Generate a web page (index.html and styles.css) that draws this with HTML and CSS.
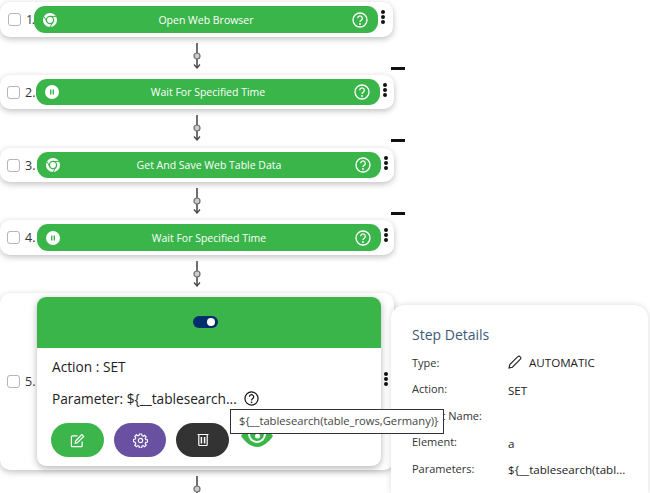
FILE: index.html
```html
<!DOCTYPE html>
<html lang="en">
<head>
    <title>Test Steps</title>
    <meta charset="utf-8"/>
    <link rel="stylesheet" href="styles.css">
</head>
<body>
<svg class="defs">
    <defs>
        <symbol id="chrome" viewBox="0 0 14 14">
            <circle cx="7" cy="7" r="7" fill="#fff"/>
            <circle cx="7" cy="7" r="3.6" fill="none" stroke="#39b54a" stroke-width="1.3"/>
            <path d="M7 3.4H13M10.2 8.8L7 14M3.9 8.8L1 3.5" stroke="#39b54a" stroke-width="1" fill="none"/>
        </symbol>
        <symbol id="pause" viewBox="0 0 14 14">
            <circle cx="7" cy="7" r="7" fill="#fff"/>
            <path d="M5 4.5h1.4v5H5zM7.6 4.5H9v5H7.6z" fill="#39b54a"/>
        </symbol>
        <symbol id="help" viewBox="0 0 16 16">
            <circle cx="8" cy="8" r="7" fill="none" stroke="currentColor" stroke-width="1.3"/>
            <path d="M5.7 6.2a2.3 2.3 0 1 1 3.5 2c-.8.5-1.2.9-1.2 1.8" fill="none" stroke="currentColor" stroke-width="1.3"/>
            <circle cx="8" cy="12" r=".9" fill="currentColor"/>
        </symbol>
        <symbol id="link" viewBox="0 0 12 26">
            <path d="M6 0V24" stroke="#707070" stroke-width="2"/>
            <circle cx="6" cy="13" r="3" fill="#ccc" stroke="#707070" stroke-width="1.2"/>
            <path d="M3 21.5L6 25L9 21.5" fill="none" stroke="#444" stroke-width="1.2"/>
        </symbol>
    </defs>
</svg>

<div class="flow">
    <div class="step step-one">
        <input class="check" type="checkbox">
        <span class="num">1.</span>
        <div class="pill pill-tall">
            <svg class="pill-icon"><use href="#chrome"/></svg>
            <span class="pill-name">Open Web Browser</span>
            <svg class="pill-help"><use href="#help"/></svg>
        </div>
        <div class="kebab"><i></i><i></i><i></i></div>
    </div>
    <div class="link"><svg><use href="#link"/></svg><b class="dash"></b></div>

    <div class="step step-two">
        <input class="check" type="checkbox">
        <span class="num">2.</span>
        <div class="pill">
            <svg class="pill-icon"><use href="#pause"/></svg>
            <span class="pill-name">Wait For Specified Time</span>
            <svg class="pill-help"><use href="#help"/></svg>
        </div>
        <div class="kebab"><i></i><i></i><i></i></div>
    </div>
    <div class="link link-long"><svg><use href="#link"/></svg><b class="dash"></b></div>

    <div class="step">
        <input class="check" type="checkbox">
        <span class="num">3.</span>
        <div class="pill">
            <svg class="pill-icon"><use href="#chrome"/></svg>
            <span class="pill-name">Get And Save Web Table Data</span>
            <svg class="pill-help"><use href="#help"/></svg>
        </div>
        <div class="kebab"><i></i><i></i><i></i></div>
    </div>
    <div class="link"><svg><use href="#link"/></svg><b class="dash"></b></div>

    <div class="step">
        <input class="check" type="checkbox">
        <span class="num">4.</span>
        <div class="pill pill-tall">
            <svg class="pill-icon"><use href="#pause"/></svg>
            <span class="pill-name">Wait For Specified Time</span>
            <svg class="pill-help"><use href="#help"/></svg>
        </div>
        <div class="kebab"><i></i><i></i><i></i></div>
    </div>
    <div class="link"><svg><use href="#link"/></svg></div>

    <div class="step step-open">
        <input class="check" type="checkbox">
        <span class="num">5.</span>
        <div class="detail">
            <div class="detail-head"><span class="toggle"></span></div>
            <div class="detail-body">
                <div class="detail-action">Action : SET</div>
                <div class="detail-param">
                    Parameter: ${__tablesearch...
                    <svg class="param-help"><use href="#help"/></svg>
                </div>
                <div class="actions">
                    <span class="btn btn-edit">
                        <svg viewBox="0 0 16 16" width="15" height="15" fill="none" stroke="#fff" stroke-width="1.3">
                            <path d="M13 9v4.5a1 1 0 0 1-1 1H2.5a1 1 0 0 1-1-1V4a1 1 0 0 1 1-1H8"/>
                            <path d="M6 8.5L12.6 1.6l2 2L7.8 10.4 5.6 10.8z"/>
                        </svg>
                    </span>
                    <span class="btn btn-gear">
                        <svg viewBox="0 0 16 16" width="15" height="15" fill="none" stroke="#fff" stroke-width="1.2">
                            <circle cx="8" cy="8" r="2.3"/>
                            <path d="M6.8 1h2.4l.3 1.9 1.3.6 1.6-1.1 1.7 1.7-1.1 1.6.6 1.3 1.9.3v2.4l-1.9.3-.6 1.3 1.1 1.6-1.7 1.7-1.6-1.1-1.3.6-.3 1.9H6.8l-.3-1.9-1.3-.6-1.6 1.1-1.7-1.7 1.1-1.6-.6-1.3L.5 9.2V6.8l1.9-.3.6-1.3-1.1-1.6 1.7-1.7 1.6 1.1 1.3-.6z"/>
                        </svg>
                    </span>
                    <span class="btn btn-trash">
                        <svg viewBox="0 0 14 14" width="14" height="14" fill="none" stroke="#fff" stroke-width="1.2">
                            <path d="M1.5 1.5h11"/>
                            <rect x="2.8" y="1.5" width="8.4" height="11" rx=".8"/>
                            <path d="M5.4 4v6.5M8.6 4v6.5" stroke-width="1.5"/>
                        </svg>
                    </span>
                    <svg class="eye" viewBox="0 0 32 24">
                        <path d="M0 13C6 5 11 0 16 0s10 5 16 13c-4 6-10 11-16 11S4 19 0 13z" fill="#39b54a"/>
                        <circle cx="16" cy="11" r="9" fill="#fff"/>
                        <circle cx="16" cy="11" r="7" fill="#39b54a"/>
                        <circle cx="16.500" cy="13" r="2.500" fill="#fff"/>
                    </svg>
                </div>
            </div>
        </div>
        <div class="kebab"><i></i><i></i><i></i></div>
    </div>
    <div class="link link-last"><svg><use href="#link"/></svg></div>
</div>

<aside class="panel">
    <h3 class="panel-title">Step Details</h3>
    <dl class="facts">
        <dt>Type:</dt>
        <dd class="fact-type">
            <svg class="pencil" viewBox="0 0 14 14" width="14" height="14" fill="none" stroke="#222" stroke-width="1.1">
                <path d="M1 13l.8-3.4L9.8 1.6a1.500 1.500 0 0 1 2.200 0l.4.4a1.500 1.500 0 0 1 0 2.200L4.400 12.200z"/>
            </svg>
            AUTOMATIC
        </dd>
        <dt>Action:</dt>
        <dd>SET</dd>
        <dt>Object Name:</dt>
        <dd></dd>
        <dt>Element:</dt>
        <dd>a</dd>
        <dt>Parameters:</dt>
        <dd>${__tablesearch(tabl...</dd>
    </dl>
</aside>

<div class="tooltip">${__tablesearch(table_rows,Germany)}</div>
</body>
</html>
```

FILE: styles.css
```css
* {
    box-sizing: border-box;
}

html, body {
    height: 493px;
    overflow: hidden;
}

body {
    margin: 0;
    padding: 0;
    background: #fff;
    position: relative;
    font-family: "Open Sans", sans-serif;
    color: #333;
}

.defs {
    display: none;
}

.flow {
    padding-top: 2px;
    width: 394px;
}

.step {
    display: flex;
    align-items: center;
    width: 394px;
    padding: 4px 0 4px 7px;
    background: #fff;
    border-radius: 10px;
    box-shadow: 0 2px 6px rgba(0,0,0,.25);
}

.step-one {
    width: 393px;
    padding-left: 8px;
}

.check {
    appearance: none;
    -webkit-appearance: none;
    width: 13px;
    height: 13px;
    margin: 0;
    flex: none;
    background: #fff;
    border: 1px solid #b5b5b5;
    border-radius: 3px;
}

.num {
    width: 17px;
    padding-left: 5px;
    flex: none;
    font-size: 12.5px;
    white-space: nowrap;
}

.step-one .num {
    width: 13px;
    letter-spacing: -1.5px;
}

.step-two .num {
    width: 16px;
}

.pill {
    display: grid;
    grid-template-columns: 40px 1fr 40px;
    align-items: center;
    width: 344px;
    height: 26px;
    flex: none;
    background: #39b54a;
    border-radius: 11px;
    color: #fff;
}

.pill-tall {
    height: 27px;
}

.pill-icon {
    width: 14px;
    height: 14px;
    margin-left: 9px;
}

.pill-name {
    font-size: 10.5px;
    text-align: center;
}

.pill-help {
    width: 16px;
    height: 16px;
    justify-self: end;
    margin-right: 10px;
    color: #fff;
}

.kebab {
    display: flex;
    flex-direction: column;
    gap: 1px;
    align-self: flex-start;
    margin: 4px 0 0 3px;
}

.kebab i {
    display: block;
    width: 4px;
    height: 4px;
    background: #111;
    border-radius: 50%;
}

.link {
    position: relative;
    height: 38px;
    padding: 6px 0 0 191px;
}

.link-long {
    height: 39px;
}

.link-last {
    height: 23px;
    overflow: hidden;
}

.link svg {
    display: block;
    width: 12px;
    height: 26px;
}

.dash {
    position: absolute;
    left: 391px;
    top: 30px;
    width: 14px;
    height: 3px;
    background: #111;
}

.step-open {
    height: 177px;
}

.step-open .kebab {
    align-self: center;
    margin-top: -6px;
}

.detail {
    width: 344px;
    height: 169px;
    flex: none;
    background: #fff;
    border-radius: 9px;
    overflow: hidden;
    box-shadow: 0 2px 7px rgba(0,0,0,.3);
}

.detail-head {
    display: flex;
    align-items: center;
    justify-content: center;
    height: 51px;
    background: #39b54a;
}

.toggle {
    position: relative;
    display: block;
    width: 25px;
    height: 12px;
    margin-top: -1px;
    margin-left: -8px;
    background: #002e6d;
    border-radius: 6px;
}

.toggle::after {
    content: "";
    position: absolute;
    right: 3px;
    top: 2px;
    width: 8px;
    height: 8px;
    background: #fff;
    border-radius: 50%;
}

.detail-body {
    padding: 9px 15px 0;
    font-size: 13.7px;
    color: #222;
}

.detail-action {
    line-height: 20px;
}

.detail-param {
    display: flex;
    align-items: center;
    gap: 6px;
    margin-top: 12px;
    line-height: 20px;
    white-space: nowrap;
}

.param-help {
    width: 15px;
    height: 15px;
    color: #111;
    margin-left: 1px;
    margin-top: -2px;
}

.actions {
    display: flex;
    align-items: flex-start;
    gap: 10px;
    margin: 14px 0 0 -1px;
}

.btn {
    display: flex;
    align-items: center;
    justify-content: center;
    width: 53px;
    height: 34px;
    border-radius: 17px;
}

.btn-edit {
    background: #3cb54a;
}

.btn-gear {
    width: 52px;
    background: #6950a1;
}

.btn-trash {
    background: #333;
}

.eye {
    flex: none;
    width: 32px;
    height: 24px;
    margin-left: 2px;
}

.panel {
    position: absolute;
    left: 391px;
    top: 305px;
    width: 257px;
    height: 188px;
    padding: 20px 20px 0 21px;
    background: #fff;
    border-radius: 14px 14px 0 0;
    box-shadow: 0 0 6px rgba(0,0,0,.15);
}

.panel-title {
    margin: 0 0 4px;
    font-size: 14px;
    font-weight: 400;
    line-height: 20px;
    color: #3c5a78;
}

.facts {
    display: grid;
    grid-template-columns: 96px 1fr;
    grid-auto-rows: 26.5px;
    align-items: center;
    margin: 0;
    font-size: 11px;
}

.facts dt {
    color: #333;
}

.facts dd {
    display: flex;
    align-items: center;
    gap: 7px;
    margin: 0;
    padding-top: 3px;
    font-size: 11.6px;
    color: #222;
}

.facts .fact-type {
    padding-top: 0;
}

.tooltip {
    position: absolute;
    left: 230px;
    top: 409px;
    width: 214px;
    height: 25px;
    padding-left: 8px;
    background: #fff;
    border: 1px solid #333;
    font-size: 11.2px;
    line-height: 22px;
    color: #444;
    white-space: nowrap;
}
```
